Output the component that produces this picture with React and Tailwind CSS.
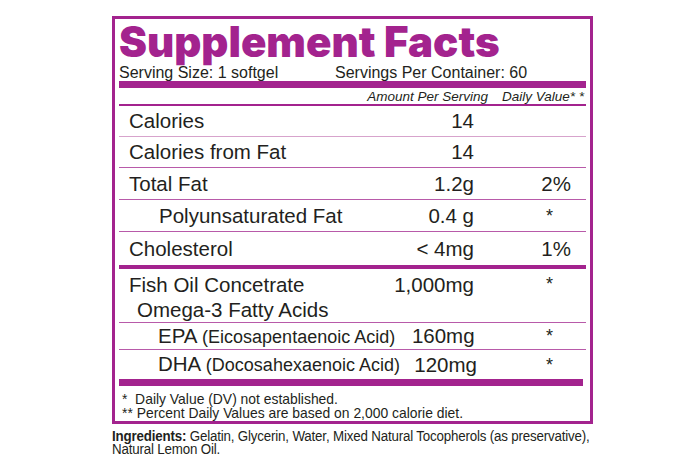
const rows = [
  { label: "Calories", value: "14", dv: "", h: "h-[31px]", line: "border-b border-[#d7a3cc]" },
  { label: "Calories from Fat", value: "14", dv: "", h: "h-[31px]", line: "border-b border-[#b85aa9]" },
  { label: "Total Fat", value: "1.2g", dv: "2%", h: "h-[32px]", line: "border-b border-[#b85aa9]" },
  { label: "Polyunsaturated Fat", value: "0.4 g", dv: "*", h: "h-[32px]", line: "border-b border-[#b85aa9]", indent: true },
  { label: "Cholesterol", value: "< 4mg", dv: "1%", h: "h-[33px]", line: "" },
];

function Dv({ v }) {
  if (v === "*") return <div className="w-[112px] text-right pr-[33px] text-[18px]">*</div>;
  return <div className="w-[112px] text-right pr-[15px]">{v}</div>;
}

export default function App() {
  return (
    <div
      className="w-[700px] h-[475px] bg-white text-[#231f20] overflow-hidden"
      style={{ fontFamily: '"Liberation Sans", Arial, sans-serif' }}
    >
      <div className="ml-[112px] mt-[16px] w-[481px] h-[408px] border-[3px] border-[#a3238e] px-[4px] flex flex-col">
        <h1
          className="h-[46px] pt-[2px] leading-[42px] text-[42px] font-black text-[#a3238e] whitespace-nowrap"
          style={{ fontFamily: "Inter, sans-serif" }}
        >
          Supplement Facts
        </h1>
        <div className="flex h-[16px] leading-[16px] text-[16px]">
          <span className="w-[216px]">Serving Size: 1 softgel</span>
          <span>Servings Per Container: 60</span>
        </div>
        <div className="h-[7px] bg-[#a3238e]" />
        <div className="flex justify-end items-end h-[16px] text-[13.5px] italic leading-[14px] pr-[2px]">
          <span className="mr-[14px]">Amount Per Serving</span>
          <span>Daily Value* *</span>
        </div>
        <div className="h-[2px] bg-[#a3238e]" />

        <div className="text-[20.5px] leading-[24px]">
          {rows.map((r) => (
            <div key={r.label} className={`flex items-center ${r.h} ${r.line}`}>
              <div className={`flex-1 ${r.indent ? "pl-[40px]" : "pl-[10px]"}`}>{r.label}</div>
              <div className="w-[120px] text-right">{r.value}</div>
              <Dv v={r.dv} />
            </div>
          ))}
          <div className="h-[4px] bg-[#a3238e]" />
          <div className="flex h-[54px] pt-[3px] border-b border-[#b85aa9]">
            <div className="flex-1 pl-[10px] leading-[25px]">
              <div>Fish Oil Concetrate</div>
              <div className="pl-[8px]">Omega-3 Fatty Acids</div>
            </div>
            <div className="w-[120px] text-right leading-[25px]">1,000mg</div>
            <div className="w-[112px] text-right pr-[33px] text-[18px] leading-[25px]">*</div>
          </div>
          <div className="flex items-center h-[27px] border-b border-[#b85aa9]">
            <div className="flex-1 pl-[39px] whitespace-nowrap">
              EPA <span className="text-[18px]">(Eicosapentaenoic Acid)</span>
            </div>
            <div className="w-[80px] text-right">160mg</div>
            <div className="w-[112px] text-right pr-[33px] text-[18px]">*</div>
          </div>
          <div className="flex items-center h-[29px]">
            <div className="flex-1 pl-[39px] whitespace-nowrap">
              DHA <span className="text-[18px]">(Docosahexaenoic Acid)</span>
            </div>
            <div className="w-[80px] text-right">120mg</div>
            <div className="w-[112px] text-right pr-[33px] text-[18px]">*</div>
          </div>
        </div>
        <div className="h-[7px] bg-[#a3238e] mr-[3px]" />
        <div className="pt-[6px] pl-[3px] text-[13.9px] leading-[14px]">
          <div>*&nbsp;&nbsp;Daily Value (DV) not established.</div>
          <div>** Percent Daily Values are based on 2,000 calorie diet.</div>
        </div>
      </div>
      <p className="ml-[112px] mt-[5px] w-[640px] text-[15.5px] leading-[13px] tracking-[-0.2px] scale-x-[0.86] origin-top-left">
        <b>Ingredients:</b> Gelatin, Glycerin, Water, Mixed Natural Tocopherols (as preservative),
        <br />
        Natural Lemon Oil.
      </p>
    </div>
  );
}
